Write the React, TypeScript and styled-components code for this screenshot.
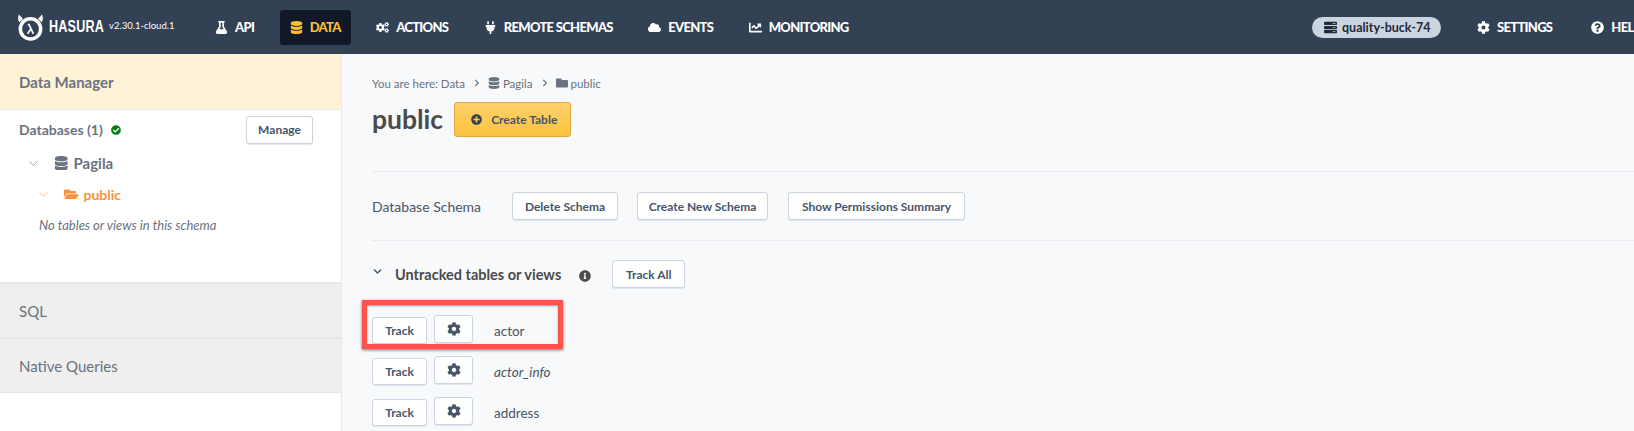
import { createGlobalStyle, styled } from 'styled-components';
import { ChevronDown } from 'lucide-react';
import {
  FaChartLine,
  FaCheckCircle,
  FaChevronDown,
  FaChevronRight,
  FaCloud,
  FaCog,
  FaCogs,
  FaDatabase,
  FaFlask,
  FaFolder,
  FaFolderOpen,
  FaInfoCircle,
  FaPlug,
  FaPlusCircle,
  FaQuestionCircle,
  FaServer,
} from 'react-icons/fa';

const GlobalStyle = createGlobalStyle`
  html, body {
    margin: 0;
    height: 431px;
    overflow: hidden;
    background: #f8f9fb;
    font-family: Lato, "Noto Sans", sans-serif;
  }
`;

const Page = styled.div`
  width: 1634px;
  height: 431px;
  overflow: hidden;
  display: flex;
  flex-direction: column;
`;

const Header = styled.header`
  flex: none;
  height: 54px;
  display: flex;
  align-items: center;
  padding-left: 16px;
  background: #334155;
  color: #fff;
`;

const Brand = styled.div`
  display: flex;
  align-items: center;
  width: 189px;
  flex: none;
`;

const BrandName = styled.span`
  font-family: "Liberation Sans", sans-serif;
  font-size: 17px;
  font-weight: 700;
  display: inline-block;
  width: 51px;
  margin-left: 4px;
  transform: scaleX(0.74);
  transform-origin: left center;
  white-space: nowrap;
  letter-spacing: 0.3px;
`;

const Version = styled.span`
  font-size: 9.5px;
  margin: -3px 0 0 9px;
  white-space: nowrap;
`;

const Nav = styled.nav`
  display: flex;
  align-items: center;
  gap: 15.5px;
`;

const NavItem = styled.a<{ $active?: boolean }>`
  display: flex;
  align-items: center;
  gap: 7px;
  height: 35px;
  padding: 0 10px;
  border-radius: 3px;
  font-size: 13px;
  font-weight: 900;
  letter-spacing: -0.7px;
  white-space: nowrap;
  color: ${(p) => (p.$active ? '#fbbf36' : '#fff')};
  background: ${(p) => (p.$active ? '#111827' : 'transparent')};
  svg {
    flex: none;
    font-size: 13px;
  }
`;

const RightNav = styled(Nav)`
  margin-left: auto;
  margin-right: -17px;
  gap: 19px;
  flex: none;
`;

const Pill = styled.div`
  display: flex;
  align-items: center;
  gap: 5px;
  height: 21px;
  width: 129px;
  box-sizing: border-box;
  padding-left: 12px;
  margin-right: 7px;
  border-radius: 11px;
  background: #cbd5e1;
  color: #1f2937;
  font-size: 12.5px;
  font-weight: 700;
  white-space: nowrap;
  svg {
    font-size: 13px;
  }
`;

const Body = styled.div`
  flex: 1;
  display: flex;
  min-height: 0;
`;

const Sidebar = styled.aside`
  flex: none;
  width: 341px;
  background: #fff;
  border-right: 1px solid #e5e7eb;
  display: flex;
  flex-direction: column;
`;

const SideHead = styled.div`
  height: 55px;
  display: flex;
  align-items: center;
  padding-left: 19px;
  background: #fef3d7;
  border-bottom: 1px solid #e5e7eb;
  font-size: 15px;
  font-weight: 700;
  color: #6b7280;
`;

const SideContent = styled.div`
  height: 172px;
  padding: 5px 28px 0 19px;
  box-sizing: border-box;
`;

const DbRow = styled.div`
  display: flex;
  justify-content: space-between;
  align-items: center;
  height: 29px;
`;

const DbTitle = styled.div`
  display: flex;
  align-items: center;
  gap: 8px;
  font-size: 14px;
  font-weight: 700;
  color: #6b7280;
  svg {
    font-size: 10px;
    color: #0a7d12;
  }
`;

const Tree = styled.div<{ $indent: number; $tone: string; $top: number; $size: number }>`
  display: flex;
  align-items: center;
  height: 20px;
  margin: ${(p) => p.$top}px 0 0 ${(p) => p.$indent}px;
  font-size: ${(p) => p.$size}px;
  font-weight: 700;
  color: ${(p) => p.$tone};
`;

const TreeIcon = styled.span`
  display: inline-flex;
  margin: 0 5px 0 13px;
  font-size: 14.5px;
`;

const Empty = styled.div`
  margin: 13px 0 0 20px;
  font-size: 13px;
  font-style: italic;
  color: #6b7280;
`;

const SideTab = styled.div`
  height: 55px;
  box-sizing: border-box;
  display: flex;
  align-items: center;
  padding-left: 19px;
  background: #efefef;
  border-top: 2px solid #e5e7eb;
  font-size: 15px;
  color: #6b7280;
`;

const SideFill = styled.div`
  flex: 1;
  border-top: 1px solid #e5e7eb;
`;

const Main = styled.main`
  position: relative;
  flex: 1;
  padding: 21px 0 0 30px;
  color: #4b5563;
`;

const Crumbs = styled.div`
  display: flex;
  align-items: center;
  height: 16px;
  font-size: 11.5px;
  color: #6b7280;
  svg {
    font-size: 12px;
    margin-right: 3px;
  }
`;

const CrumbSep = styled(FaChevronRight)`
  && {
    font-size: 8px;
    margin: 0 7px 0 8px;
  }
`;

const TitleRow = styled.div`
  display: flex;
  align-items: center;
  gap: 11px;
  margin-top: 11px;
`;

const Title = styled.h1`
  margin: 0;
  font-size: 26.5px;
  font-weight: 700;
  line-height: 35px;
  color: #4b4b4b;
`;

const CreateButton = styled.button`
  display: flex;
  align-items: center;
  gap: 9px;
  width: 117px;
  height: 35px;
  padding: 0 16px;
  border: 1px solid #dba93c;
  border-radius: 3px;
  background: linear-gradient(#fdd06c, #fcc33e);
  font: 700 12px Lato, sans-serif;
  color: #475569;
  white-space: nowrap;
  svg {
    flex: none;
    font-size: 11px;
    color: #334155;
  }
`;

const Rule = styled.hr<{ $top?: number }>`
  height: 1px;
  margin: ${(p) => p.$top ?? 0}px 0 0;
  border: 0;
  background: #e9ebef;
`;

const SchemaRow = styled.div`
  display: flex;
  align-items: center;
  height: 28px;
  margin: 20px 0;
  font-size: 14px;
  color: #4b5563;
`;

const SchemaLabel = styled.span`
  width: 140px;
`;

const Btn = styled.button<{ $w: number; $gap?: number }>`
  flex: none;
  width: ${(p) => p.$w}px;
  height: 28px;
  margin-right: ${(p) => p.$gap ?? 0}px;
  padding: 0;
  display: inline-flex;
  align-items: center;
  justify-content: center;
  background: #fff;
  border: 1px solid #cbd5e1;
  border-radius: 3px;
  box-shadow: 0 1px 1px rgba(148, 163, 184, 0.25);
  font: 700 12px Lato, sans-serif;
  color: #475569;
  white-space: nowrap;
  svg {
    font-size: 14px;
  }
`;

const SectionRow = styled.div`
  display: flex;
  align-items: center;
  height: 28px;
  margin: 19px 0 27px;
`;

const SectionChevron = styled(FaChevronDown)`
  font-size: 9px;
  margin: -5px 13px 0 1px;
  color: #4b5563;
`;

const SectionTitle = styled.span`
  font-size: 14.5px;
  font-weight: 700;
  color: #4b4b4b;
`;

const SectionInfo = styled(FaInfoCircle)`
  font-size: 12px;
  margin: 4px 21px 0 18px;
  color: #4b4b4b;
`;

const TableRow = styled.div`
  display: flex;
  align-items: flex-start;
  height: 41px;
`;

const TrackBtn = styled(Btn)`
  height: 27px;
  margin-top: 2px;
  margin-right: 7px;
`;

const TableName = styled.span<{ $italic?: boolean }>`
  margin: 8px 0 0 21px;
  font-size: 13.5px;
  font-style: ${(p) => (p.$italic ? 'italic' : 'normal')};
  color: #4b5563;
`;

const Highlight = styled.div`
  position: absolute;
  left: 20px;
  top: 246px;
  width: 201px;
  height: 49px;
  box-sizing: border-box;
  border: 5px solid #f9554a;
  box-shadow: 0 1px 3px rgba(0, 0, 0, 0.55), inset 0 1px 2px rgba(0, 0, 0, 0.4);
  pointer-events: none;
`;

function Logo() {
  return (
    <svg width="29" height="29" viewBox="0 0 30 30" fill="none">
      <path d="M3 1.5c-1.2 3-1 5.5 .3 8l4-3.200C6 4.800 4.500 3 3 1.500zM27 1.500c1.200 3 1 5.500-.3 8l-4-3.200c1.300-1.500 2.800-3.300 4.300-4.800z" fill="#fff" />
      <circle cx="15" cy="16.500" r="10.500" stroke="#fff" strokeWidth="3.600" />
      <path d="M12 12h1.500l4.500 9.500M15.300 16.500L12 21.500" stroke="#fff" strokeWidth="1.700" />
    </svg>
  );
}

const tables = [
  { name: 'actor' },
  { name: 'actor_info', italic: true },
  { name: 'address' },
];

export default function App() {
  return (
    <Page>
      <GlobalStyle />
      <Header>
        <Brand>
          <Logo />
          <BrandName>HASURA</BrandName>
          <Version>v2.30.1-cloud.1</Version>
        </Brand>
        <Nav>
          <NavItem><FaFlask />API</NavItem>
          <NavItem $active><FaDatabase />DATA</NavItem>
          <NavItem><FaCogs />ACTIONS</NavItem>
          <NavItem><FaPlug />REMOTE SCHEMAS</NavItem>
          <NavItem><FaCloud />EVENTS</NavItem>
          <NavItem><FaChartLine />MONITORING</NavItem>
        </Nav>
        <RightNav>
          <Pill><FaServer />quality-buck-74</Pill>
          <NavItem><FaCog />SETTINGS</NavItem>
          <NavItem><FaQuestionCircle />HELP</NavItem>
        </RightNav>
      </Header>
      <Body>
        <Sidebar>
          <SideHead>Data Manager</SideHead>
          <SideContent>
            <DbRow>
              <DbTitle>Databases (1) <FaCheckCircle /></DbTitle>
              <Btn $w={67}>Manage</Btn>
            </DbRow>
            <Tree $indent={7} $tone="#6b7280" $top={9} $size={15}>
              <ChevronDown size={15} strokeWidth={1} />
              <TreeIcon><FaDatabase /></TreeIcon>Pagila
            </Tree>
            <Tree $indent={17} $tone="#fb923c" $top={11} $size={14}>
              <ChevronDown size={15} strokeWidth={1} />
              <TreeIcon><FaFolderOpen /></TreeIcon>public
            </Tree>
            <Empty>No tables or views in this schema</Empty>
          </SideContent>
          <SideTab>SQL</SideTab>
          <SideTab>Native Queries</SideTab>
          <SideFill />
        </Sidebar>
        <Main>
          <Crumbs>
            You are here: Data<CrumbSep /><FaDatabase />Pagila<CrumbSep /><FaFolder />public
          </Crumbs>
          <TitleRow>
            <Title>public</Title>
            <CreateButton><FaPlusCircle />Create Table</CreateButton>
          </TitleRow>
          <Rule $top={34} />
          <SchemaRow>
            <SchemaLabel>Database Schema</SchemaLabel>
            <Btn $w={106} $gap={19}>Delete Schema</Btn>
            <Btn $w={131} $gap={20}>Create New Schema</Btn>
            <Btn $w={177}>Show Permissions Summary</Btn>
          </SchemaRow>
          <Rule />
          <SectionRow>
            <SectionChevron />
            <SectionTitle>Untracked tables or views</SectionTitle>
            <SectionInfo />
            <Btn $w={73}>Track All</Btn>
          </SectionRow>
          {tables.map((t) => (
            <TableRow key={t.name}>
              <TrackBtn $w={55}>Track</TrackBtn>
              <Btn $w={39}><FaCog /></Btn>
              <TableName $italic={t.italic}>{t.name}</TableName>
            </TableRow>
          ))}
          <Highlight />
        </Main>
      </Body>
    </Page>
  );
}
